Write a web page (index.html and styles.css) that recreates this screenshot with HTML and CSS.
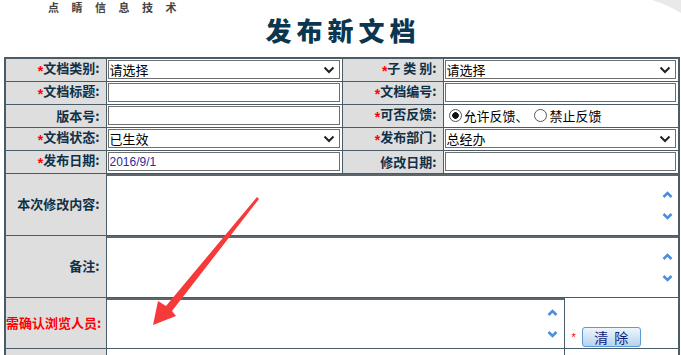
FILE: index.html
```html
<!DOCTYPE html>
<html lang="zh-CN">
<head>
    <meta charset="UTF-8">
    <title>发布新文档</title>
    <link rel="stylesheet" href="styles.css">
</head>
<body>
    <div class="header">
        <div class="brand">点睛信息技术</div>
        <h1>发布新文档</h1>
    </div>

    <table class="doc-form">
        <colgroup>
            <col class="c-label">
            <col class="c-field">
            <col class="c-label">
            <col class="c-half">
            <col class="c-side">
        </colgroup>
        <tr class="line">
            <th><span class="req">*</span>文档类别:</th>
            <td><select><option>请选择</option></select></td>
            <th><span class="req">*</span>子 类 别:</th>
            <td colspan="2"><select><option>请选择</option></select></td>
        </tr>
        <tr class="line">
            <th><span class="req">*</span>文档标题:</th>
            <td><input type="text"></td>
            <th><span class="req">*</span>文档编号:</th>
            <td colspan="2"><input type="text"></td>
        </tr>
        <tr class="line">
            <th>版本号:</th>
            <td><input type="text"></td>
            <th><span class="req">*</span>可否反馈:</th>
            <td colspan="2" class="radios">
                <label><input type="radio" name="fb" checked>允许反馈、</label>
                <label><input type="radio" name="fb">禁止反馈</label>
            </td>
        </tr>
        <tr class="line">
            <th><span class="req">*</span>文档状态:</th>
            <td><select><option>已生效</option></select></td>
            <th><span class="req">*</span>发布部门:</th>
            <td colspan="2"><select><option>总经办</option></select></td>
        </tr>
        <tr class="line">
            <th><span class="req">*</span>发布日期:</th>
            <td><input type="text" class="date" value="2016/9/1"></td>
            <th>修改日期:</th>
            <td colspan="2"><input type="text"></td>
        </tr>
        <tr>
            <th>本次修改内容:</th>
            <td colspan="4">
                <div class="area">
                    <textarea></textarea>
                    <div class="scroll">
                        <svg width="11" height="7"><polyline points="1.5,6 5.5,2 9.5,6"/></svg>
                        <svg width="11" height="7"><polyline points="1.5,1 5.5,5 9.5,1"/></svg>
                    </div>
                </div>
            </td>
        </tr>
        <tr>
            <th>备注:</th>
            <td colspan="4">
                <div class="area">
                    <textarea></textarea>
                    <div class="scroll">
                        <svg width="11" height="7"><polyline points="1.5,6 5.5,2 9.5,6"/></svg>
                        <svg width="11" height="7"><polyline points="1.5,1 5.5,5 9.5,1"/></svg>
                    </div>
                </div>
            </td>
        </tr>
        <tr>
            <th class="warn">需确认浏览人员:</th>
            <td colspan="3">
                <div class="area short">
                    <textarea></textarea>
                    <div class="scroll">
                        <svg width="11" height="7"><polyline points="1.5,6 5.5,2 9.5,6"/></svg>
                        <svg width="11" height="7"><polyline points="1.5,1 5.5,5 9.5,1"/></svg>
                    </div>
                </div>
            </td>
            <td class="side">
                <span class="req small">*</span>
                <button class="btn-clear">清除</button>
            </td>
        </tr>
        <tr class="line">
            <th>&nbsp;</th>
            <td colspan="3"></td>
            <td></td>
        </tr>
    </table>

    <!-- 截图上的标注箭头 -->
    <svg class="overlay" width="681" height="355">
        <path d="M652,0 Q668,5 681,13 L681,0 Z" fill="#e9e9e9"/>
        <polygon points="257,197 259,199 172,311 176,316 153,325 158,301 166,306" fill="#f63a3a"/>
    </svg>
</body>
</html>
```
FILE: styles.css
```css
body {
    margin: 0;
    font-family: "Noto Sans CJK SC", sans-serif;
    font-size: 13px;
    color: #000;
    background: #fff;
    position: relative;
    overflow: hidden;
}
.header {
    height: 57px;
}
.brand {
    padding: 1px 0 0 48px;
    font-size: 11px;
    line-height: 13px;
    letter-spacing: 12.5px;
    color: #444;
    font-weight: bold;
}
h1 {
    margin: 0;
    text-align: center;
    font-size: 26px;
    line-height: 32px;
    letter-spacing: 5px;
    padding-left: 5px;
    color: #0b3650;
    font-weight: 900;
}
.doc-form {
    margin-left: 4px;
    width: 674px;
    border-collapse: collapse;
    table-layout: fixed;
    border: 2px solid #4a5c68;
}
.c-label { width: 101px; }
.c-field { width: 236px; }
.c-half { width: 121px; }
.c-side { width: 115px; }
.doc-form th,
.doc-form td {
    border: 1px solid #4a5c68;
    padding: 0;
}
.doc-form th {
    background: #dedede;
    text-align: right;
    padding-right: 6px;
    font-weight: bold;
    color: #0f3047;
    white-space: nowrap;
    line-height: 16px;
}
.doc-form td {
    background: #fff;
    padding: 0 2px 0 1px;
}
.line { height: 23px; }
.req {
    color: #f00;
    font-family: "Liberation Sans", sans-serif;
    font-weight: bold;
    font-size: 14px;
    vertical-align: -3px;
}
.warn { color: #f00 !important; }
select,
input[type="text"] {
    display: block;
    width: 100%;
    height: 19px;
    box-sizing: border-box;
    margin: 0;
    border: 1px solid #6f6f6f;
    border-radius: 0;
    background-color: #fff;
    font-family: "Noto Sans CJK SC", sans-serif;
    font-size: 13px;
    line-height: 17px;
    color: #000;
    padding: 0 0 0 1px;
}
select {
    appearance: none;
    -webkit-appearance: none;
    background-image: url("data:image/svg+xml,%3Csvg xmlns='http://www.w3.org/2000/svg' width='12' height='8'%3E%3Cpolyline points='1.5,1.5 6,6 10.5,1.5' fill='none' stroke='%23222' stroke-width='2'/%3E%3C/svg%3E");
    background-repeat: no-repeat;
    background-position: right 4px center;
}
input.date {
    font-family: "Liberation Sans", sans-serif;
    font-size: 12px;
    color: #2b2ba0;
}
.radios {
    padding-left: 5px !important;
    white-space: nowrap;
}
.radios label {
    display: inline-flex;
    align-items: center;
    margin-right: 3px;
}
input[type="radio"] {
    appearance: none;
    -webkit-appearance: none;
    width: 13px;
    height: 13px;
    margin: 0 2px 0 0;
    border: 1px solid #555;
    border-radius: 50%;
    background: #fff;
}
input[type="radio"]:checked {
    background: radial-gradient(circle, #111 0 3px, #fff 3.6px);
}
.doc-form td[colspan="4"],
.doc-form td[colspan="3"] {
    padding: 0;
}
.area {
    display: flex;
    box-sizing: border-box;
    height: 61px;
    border-top: 2px solid #5e666d;
}
.area.short {
    height: 50px;
}
.area textarea {
    flex: 1;
    border: none;
    resize: none;
    overflow: hidden;
    outline: none;
    margin: 0;
    padding: 2px;
    font-family: "Noto Sans CJK SC", sans-serif;
    font-size: 13px;
}
.scroll {
    width: 20px;
    display: flex;
    flex-direction: column;
    align-items: center;
    justify-content: center;
    gap: 15px;
    padding-right: 1px;
}
.scroll svg polyline {
    fill: none;
    stroke: #4a8fe0;
    stroke-width: 2.6;
}
.doc-form td.side {
    vertical-align: bottom;
    padding: 0 0 1px 7px;
    white-space: nowrap;
}
.req.small {
    font-size: 11px;
    font-weight: normal;
    margin-right: 3px;
    vertical-align: 2px;
}
.btn-clear {
    width: 59px;
    height: 20px;
    border: 1px solid #5b9bd5;
    border-radius: 3px;
    background: linear-gradient(#eef5fc, #b7d3ee);
    color: #10207a;
    font-family: "Noto Sans CJK SC", sans-serif;
    font-size: 14px;
    letter-spacing: 6px;
    padding: 0 0 0 6px;
    line-height: 18px;
}
.overlay {
    position: absolute;
    left: 0;
    top: 0;
    pointer-events: none;
}
```
